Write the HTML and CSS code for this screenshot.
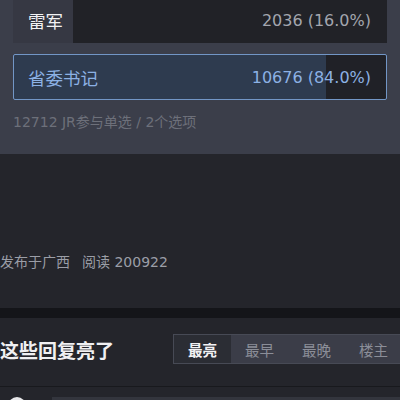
FILE: index.html
```html
<!DOCTYPE html>
<html lang="zh">
<head>
<meta charset="utf-8">
<link rel="stylesheet" href="styles.css">
</head>
<body>
<section class="poll">
  <div class="option" style="--pct:16%">
    <span class="label">雷军</span>
    <span class="count">2036 (16.0%)</span>
  </div>
  <div class="option chosen" style="--pct:84%">
    <span class="label">省委书记</span>
    <span class="count">10676 (84.0%)</span>
  </div>
  <div class="meta">12712 JR参与单选 / 2个选项</div>
</section>
<section class="post">
  <div class="pubinfo">发布于广西<span class="gap"></span>阅读 200922</div>
</section>
<div class="band"></div>
<section class="comments-head">
  <h2 class="title">这些回复亮了</h2>
  <div class="tabs">
    <span class="tab active">最亮</span>
    <span class="tab">最早</span>
    <span class="tab">最晚</span>
    <span class="tab">楼主</span>
  </div>
</section>
<section class="comment">
  <div class="avatar"></div>
  <div class="bubble"></div>
</section>
</body>
</html>
```
FILE: styles.css
```css
* { box-sizing: border-box; }
html, body {
  margin: 0;
  padding: 0;
  background: #24252b;
  overflow: hidden;
  font-family: "DejaVu Sans", "Noto Sans CJK SC", sans-serif;
}
.poll {
  margin-top: -3px;
  height: 157px;
  background: #3b3e4a;
  padding: 0 13px;
  display: flex;
  flex-direction: column;
}
.option {
  height: 46px;
  display: flex;
  align-items: center;
  justify-content: space-between;
  padding: 0 16px 0 15px;
  font-size: 16px;
  background: linear-gradient(to right, #363843 var(--pct), #212227 var(--pct));
}
.option .label {
  color: #f2f2f4;
  font-size: 17.5px;
  font-family: "Noto Sans CJK SC", sans-serif;
}
.option .count { color: #a3a6ae; }
.option.chosen {
  margin-top: 11px;
  border: 1px solid #7296c6;
  border-radius: 2px;
  background: linear-gradient(to right, #2e3b4f var(--pct), #202127 var(--pct));
  padding: 0 15px 0 14px;
}
.option.chosen .label,
.option.chosen .count { color: #8cb1e4; }
.meta {
  margin-top: 13px;
  line-height: 18px;
  font-size: 14px;
  color: #6d707a;
}
.post {
  height: 154px;
  background: #24252b;
  display: flex;
  align-items: flex-end;
  padding-bottom: 36px;
}
.pubinfo {
  font-size: 14px;
  line-height: 20px;
  color: #9b9ea7;
}
.gap { display: inline-block; width: 12px; }
.band {
  height: 10px;
  background: #141519;
}
.comments-head {
  height: 69px;
  background: #24252b;
  border-bottom: 1px solid #18191d;
  display: flex;
  align-items: center;
  justify-content: space-between;
  padding-bottom: 6px;
}
.title {
  margin: 0;
  font-size: 19px;
  font-weight: 700;
  color: #f0f0f2;
  font-family: "Noto Sans CJK SC", sans-serif;
}
.tabs {
  display: flex;
  width: 227px;
  height: 30px;
  background: #3b3d48;
  border: 1px solid #474a55;
  border-right: none;
  font-family: "Noto Sans CJK SC", sans-serif;
}
.tab {
  flex: 0 0 57px;
  display: flex;
  align-items: center;
  justify-content: center;
  font-size: 14.5px;
  color: #8b8e98;
}
.tab.active {
  background: #2b2d34;
  color: #f2f2f4;
  font-weight: 700;
}
.comment {
  display: flex;
  gap: 26px;
  padding: 10px 0 0 8px;
}
.avatar {
  width: 18px;
  height: 18px;
  border-radius: 50%;
  background: #e8e8ea;
}
.bubble {
  flex: 1;
  height: 40px;
  background: #33353d;
}
```
